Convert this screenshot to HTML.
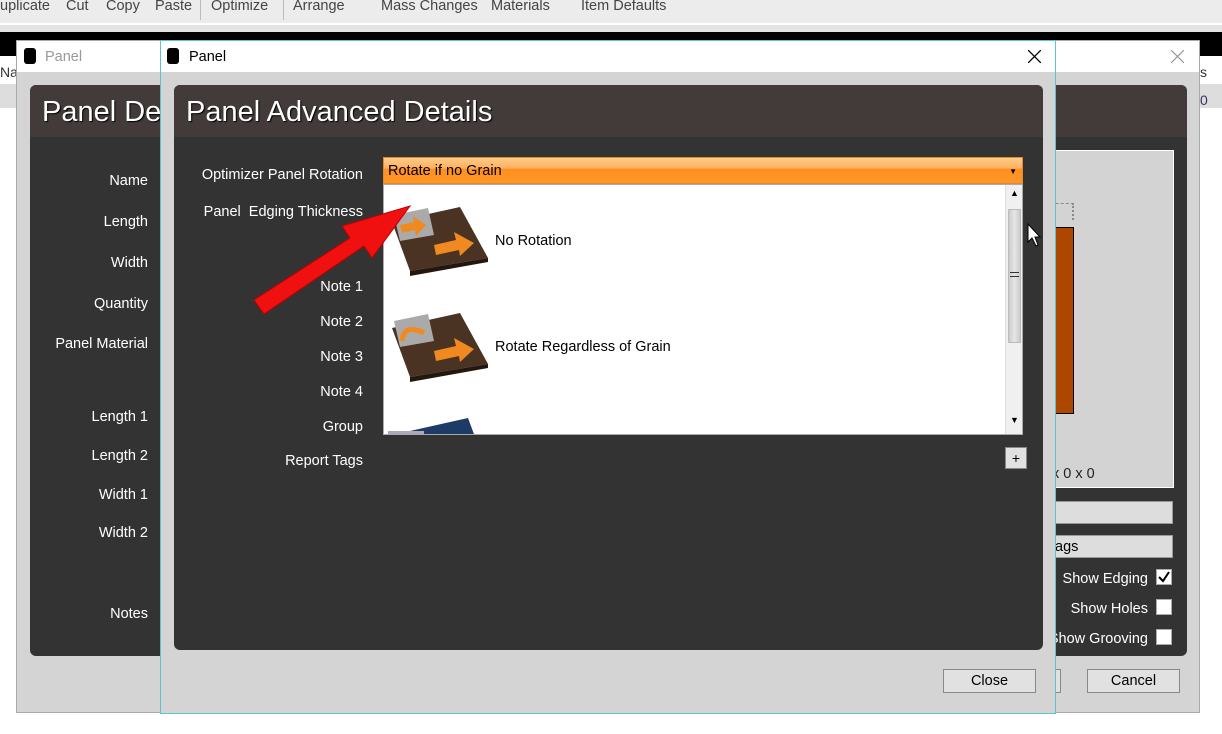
<!DOCTYPE html>
<html><head><meta charset="utf-8"><style>
*{margin:0;padding:0;box-sizing:border-box}
body{width:1222px;height:734px;position:relative;overflow:hidden;background:#fff;font-family:"Liberation Sans",sans-serif;font-size:14px;color:#000}
.a{position:absolute}
.lbl{position:absolute;color:#fff;font-size:14.5px;text-align:right;white-space:nowrap}
.btn{position:absolute;background:#e1e1e1;border:1px solid #888;text-align:center;font-size:14.5px;line-height:23px}
.cb{position:absolute;width:16px;height:16px;background:#fff;border:1px solid #aaa}
</style></head><body>
<div class="a" style="left:0;top:0;width:1222px;height:23px;background:#ececec;color:#444;font-size:14.5px;line-height:12px;white-space:nowrap">
<span class="a" style="left:0">uplicate</span><span class="a" style="left:66px">Cut</span><span class="a" style="left:106px">Copy</span><span class="a" style="left:155px">Paste</span>
<span class="a" style="left:200px;top:0;width:1px;height:20px;background:#bbb"></span>
<span class="a" style="left:211px">Optimize</span>
<span class="a" style="left:283px;top:0;width:1px;height:20px;background:#bbb"></span>
<span class="a" style="left:293px">Arrange</span><span class="a" style="left:381px">Mass Changes</span><span class="a" style="left:491px">Materials</span><span class="a" style="left:581px">Item Defaults</span></div>
<div class="a" style="left:0;top:23px;width:1222px;height:9px;background:#e4e4e4;border-top:2px solid #fff"></div>
<div class="a" style="left:0;top:32px;width:1222px;height:24px;background:#000"></div>
<div class="a" style="left:0;top:56px;width:1222px;height:30px;background:#fff"></div>
<div class="a" style="left:0;top:84px;width:1222px;height:24px;background:#ddd"></div>
<div class="a" style="left:0;top:64px;font-size:14px;color:#333">Nar</div>
<div class="a" style="left:1200px;top:64px;font-size:14px;color:#333">s</div>
<div class="a" style="left:1200px;top:92px;font-size:14px;color:#336">0</div>

<div class="a" style="left:16px;top:40px;width:1184px;height:673px;background:#d4d4d4;border:1px solid #aaa"></div>
<div class="a" style="left:17px;top:41px;width:1182px;height:31px;background:#fff"></div>
<div class="a" style="left:24px;top:48px;width:12px;height:16px;background:#000;border-radius:3px"></div>
<div class="a" style="left:45px;top:49px;color:#999;font-size:14.5px">Panel</div>
<svg class="a" style="left:1171px;top:50px" width="13" height="13"><path d="M0,0L13,13M13,0L0,13" stroke="#999" stroke-width="1.2"/></svg>
<div class="a" style="left:30px;top:85px;width:1157px;height:571px;background:#333;border-radius:6px;overflow:hidden">
 <div class="a" style="left:0;top:0;width:100%;height:52px;background:#423b39"></div>
 <div class="a" style="left:12px;top:11px;color:#fff;font-size:29px;text-shadow:1px 1px 1px #000">Panel Det</div>
</div>
<div class="lbl" style="right:1074px;top:173px">Name</div>
<div class="lbl" style="right:1074px;top:214px">Length</div>
<div class="lbl" style="right:1074px;top:255px">Width</div>
<div class="lbl" style="right:1074px;top:296px">Quantity</div>
<div class="lbl" style="right:1074px;top:336px">Panel Material</div>
<div class="lbl" style="right:1074px;top:409px">Length 1</div>
<div class="lbl" style="right:1074px;top:448px">Length 2</div>
<div class="lbl" style="right:1074px;top:487px">Width 1</div>
<div class="lbl" style="right:1074px;top:525px">Width 2</div>
<div class="lbl" style="right:1074px;top:606px">Notes</div>
<div class="a" style="left:1040px;top:150px;width:134px;height:338px;background:#d3d3d3;border:1px solid #fff"></div>
<div class="a" style="left:1040px;top:203px;width:34px;height:17px;border-top:1px dashed #888;border-right:2px dotted #888"></div>
<div class="a" style="left:1040px;top:227px;width:34px;height:187px;background:#ad4700;border:1px solid #000;border-left:none"></div>
<div class="a" style="left:1052px;top:466px;color:#222;font-size:14.5px">x 0 x 0</div>
<div class="a" style="left:1040px;top:501px;width:133px;height:23px;background:#ddd;border:1px solid #999"></div>
<div class="a" style="left:1040px;top:535px;width:133px;height:23px;background:#ddd;border:1px solid #999;font-size:14.5px;padding-left:14px;line-height:22px">ags</div>
<div class="lbl" style="right:74px;top:571px">Show Edging</div>
<div class="lbl" style="right:74px;top:601px">Show Holes</div>
<div class="lbl" style="right:74px;top:631px">Show Grooving</div>
<div class="cb" style="left:1156px;top:569px"><svg width="14" height="14"><path d="M2,7L6,11L12,2" stroke="#000" stroke-width="2" fill="none"/></svg></div>
<div class="cb" style="left:1156px;top:599px"></div>
<div class="cb" style="left:1156px;top:629px"></div>
<div class="btn" style="left:1000px;top:669px;width:61px;height:24px"></div>
<div class="btn" style="left:1087px;top:669px;width:93px;height:24px">Cancel</div>

<div class="a" style="left:160px;top:40px;width:896px;height:674px;background:#d4d4d4;border:1px solid #5fc4cc"></div>
<div class="a" style="left:161px;top:41px;width:894px;height:31px;background:#fff"></div>
<div class="a" style="left:167px;top:48px;width:12px;height:16px;background:#000;border-radius:3px"></div>
<div class="a" style="left:189px;top:49px;color:#000;font-size:14.5px">Panel</div>
<svg class="a" style="left:1028px;top:50px" width="13" height="13"><path d="M0,0L13,13M13,0L0,13" stroke="#000" stroke-width="1.3"/></svg>
<div class="a" style="left:174px;top:85px;width:869px;height:565px;background:#333;border-radius:6px;overflow:hidden">
 <div class="a" style="left:0;top:0;width:100%;height:52px;background:#423b39"></div>
 <div class="a" style="left:12px;top:11px;color:#fff;font-size:29px;text-shadow:1px 1px 1px #000">Panel Advanced Details</div>
</div>
<div class="lbl" style="right:859px;top:167px">Optimizer Panel Rotation</div>
<div class="lbl" style="right:859px;top:204px">Panel&nbsp; Edging Thickness</div>
<div class="lbl" style="right:859px;top:279px">Note 1</div>
<div class="lbl" style="right:859px;top:314px">Note 2</div>
<div class="lbl" style="right:859px;top:349px">Note 3</div>
<div class="lbl" style="right:859px;top:384px">Note 4</div>
<div class="lbl" style="right:859px;top:419px">Group</div>
<div class="lbl" style="right:859px;top:453px">Report Tags</div>

<div class="a" style="left:383px;top:157px;width:640px;height:27px;background:linear-gradient(#ffcc88 0%,#ffb060 40%,#ff9020 45%,#ff9626 100%);border:1px solid #e08a30;font-size:14.5px;padding-left:4px;line-height:27px">Rotate if no Grain<span class="a" style="right:5px;top:0;font-size:8px">▼</span></div>
<div class="a" style="left:383px;top:184px;width:640px;height:251px;background:#fff;border:1px solid #aaa;overflow:hidden">
 <div class="a" style="left:621px;top:0;width:18px;height:250px;background:#f0f0f0;border-left:1px solid #ddd"></div>
 <div class="a" style="left:626px;top:3px;font-size:9px">▲</div>
 <div class="a" style="left:626px;top:230px;font-size:9px">▼</div>
 <div class="a" style="left:624px;top:24px;width:13px;height:134px;background:linear-gradient(90deg,#ccc,#e6e6e6,#ccc);border:1px solid #bbb"></div>
 <div class="a" style="left:626px;top:87px;width:9px;height:5px;border-top:1px solid #333;border-bottom:1px solid #333"></div>
 <svg class="a" style="left:4px;top:20px" width="110" height="290">
  <g>
  <polygon points="4,17 72,2 100,53 22,66" fill="#4a3322"/><polygon points="22,66 100,53 100,57 22,71" fill="#24170e"/>
  <polygon points="6,10 40,3 46,30 12,36" fill="#aaa"/>
  <polygon points="12,20 26,17 25,11 38,20 28,31 27,25 14,28" fill="#f08a20"/>
  <polygon points="46,40 68,35 66,27 86,38 72,51 71,45 48,50" fill="#f08a20"/></g>
  <g transform="translate(0,106)">
  <polygon points="4,17 72,2 100,53 22,66" fill="#4a3322"/><polygon points="22,66 100,53 100,57 22,71" fill="#24170e"/>
  <polygon points="6,10 40,3 46,30 12,36" fill="#aaa"/>
  <path d="M14,30 Q16,12 36,22" stroke="#f08a20" stroke-width="5" fill="none"/>
  <polygon points="46,40 68,35 66,27 86,38 72,51 71,45 48,50" fill="#f08a20"/></g>
  <polygon points="4,230 80,213 90,240 0,240" fill="#1e3a66"/><rect x="0" y="226" width="36" height="20" fill="#aab"/>
 </svg>
 <div class="a" style="left:111px;top:48px;font-size:14.5px">No Rotation</div>
 <div class="a" style="left:111px;top:154px;font-size:14.5px">Rotate Regardless of Grain</div>
</div>
<div class="btn" style="left:1005px;top:447px;width:22px;height:22px;line-height:21px;font-size:14px">+</div>
<div class="btn" style="left:943px;top:669px;width:93px;height:24px">Close</div>

<svg class="a" style="left:0;top:0" width="1222" height="734">
 <polygon points="254,300 350,238 342,226 410,206 372,258 364,246 264,314" fill="#f01010" stroke="#b00" stroke-width="1"/>
 <polygon points="1028,224 1028,242 1032,238 1036,246 1038,245 1035,237 1040,237" fill="#fff" stroke="#000" stroke-width="1"/>
</svg>
</body></html>
